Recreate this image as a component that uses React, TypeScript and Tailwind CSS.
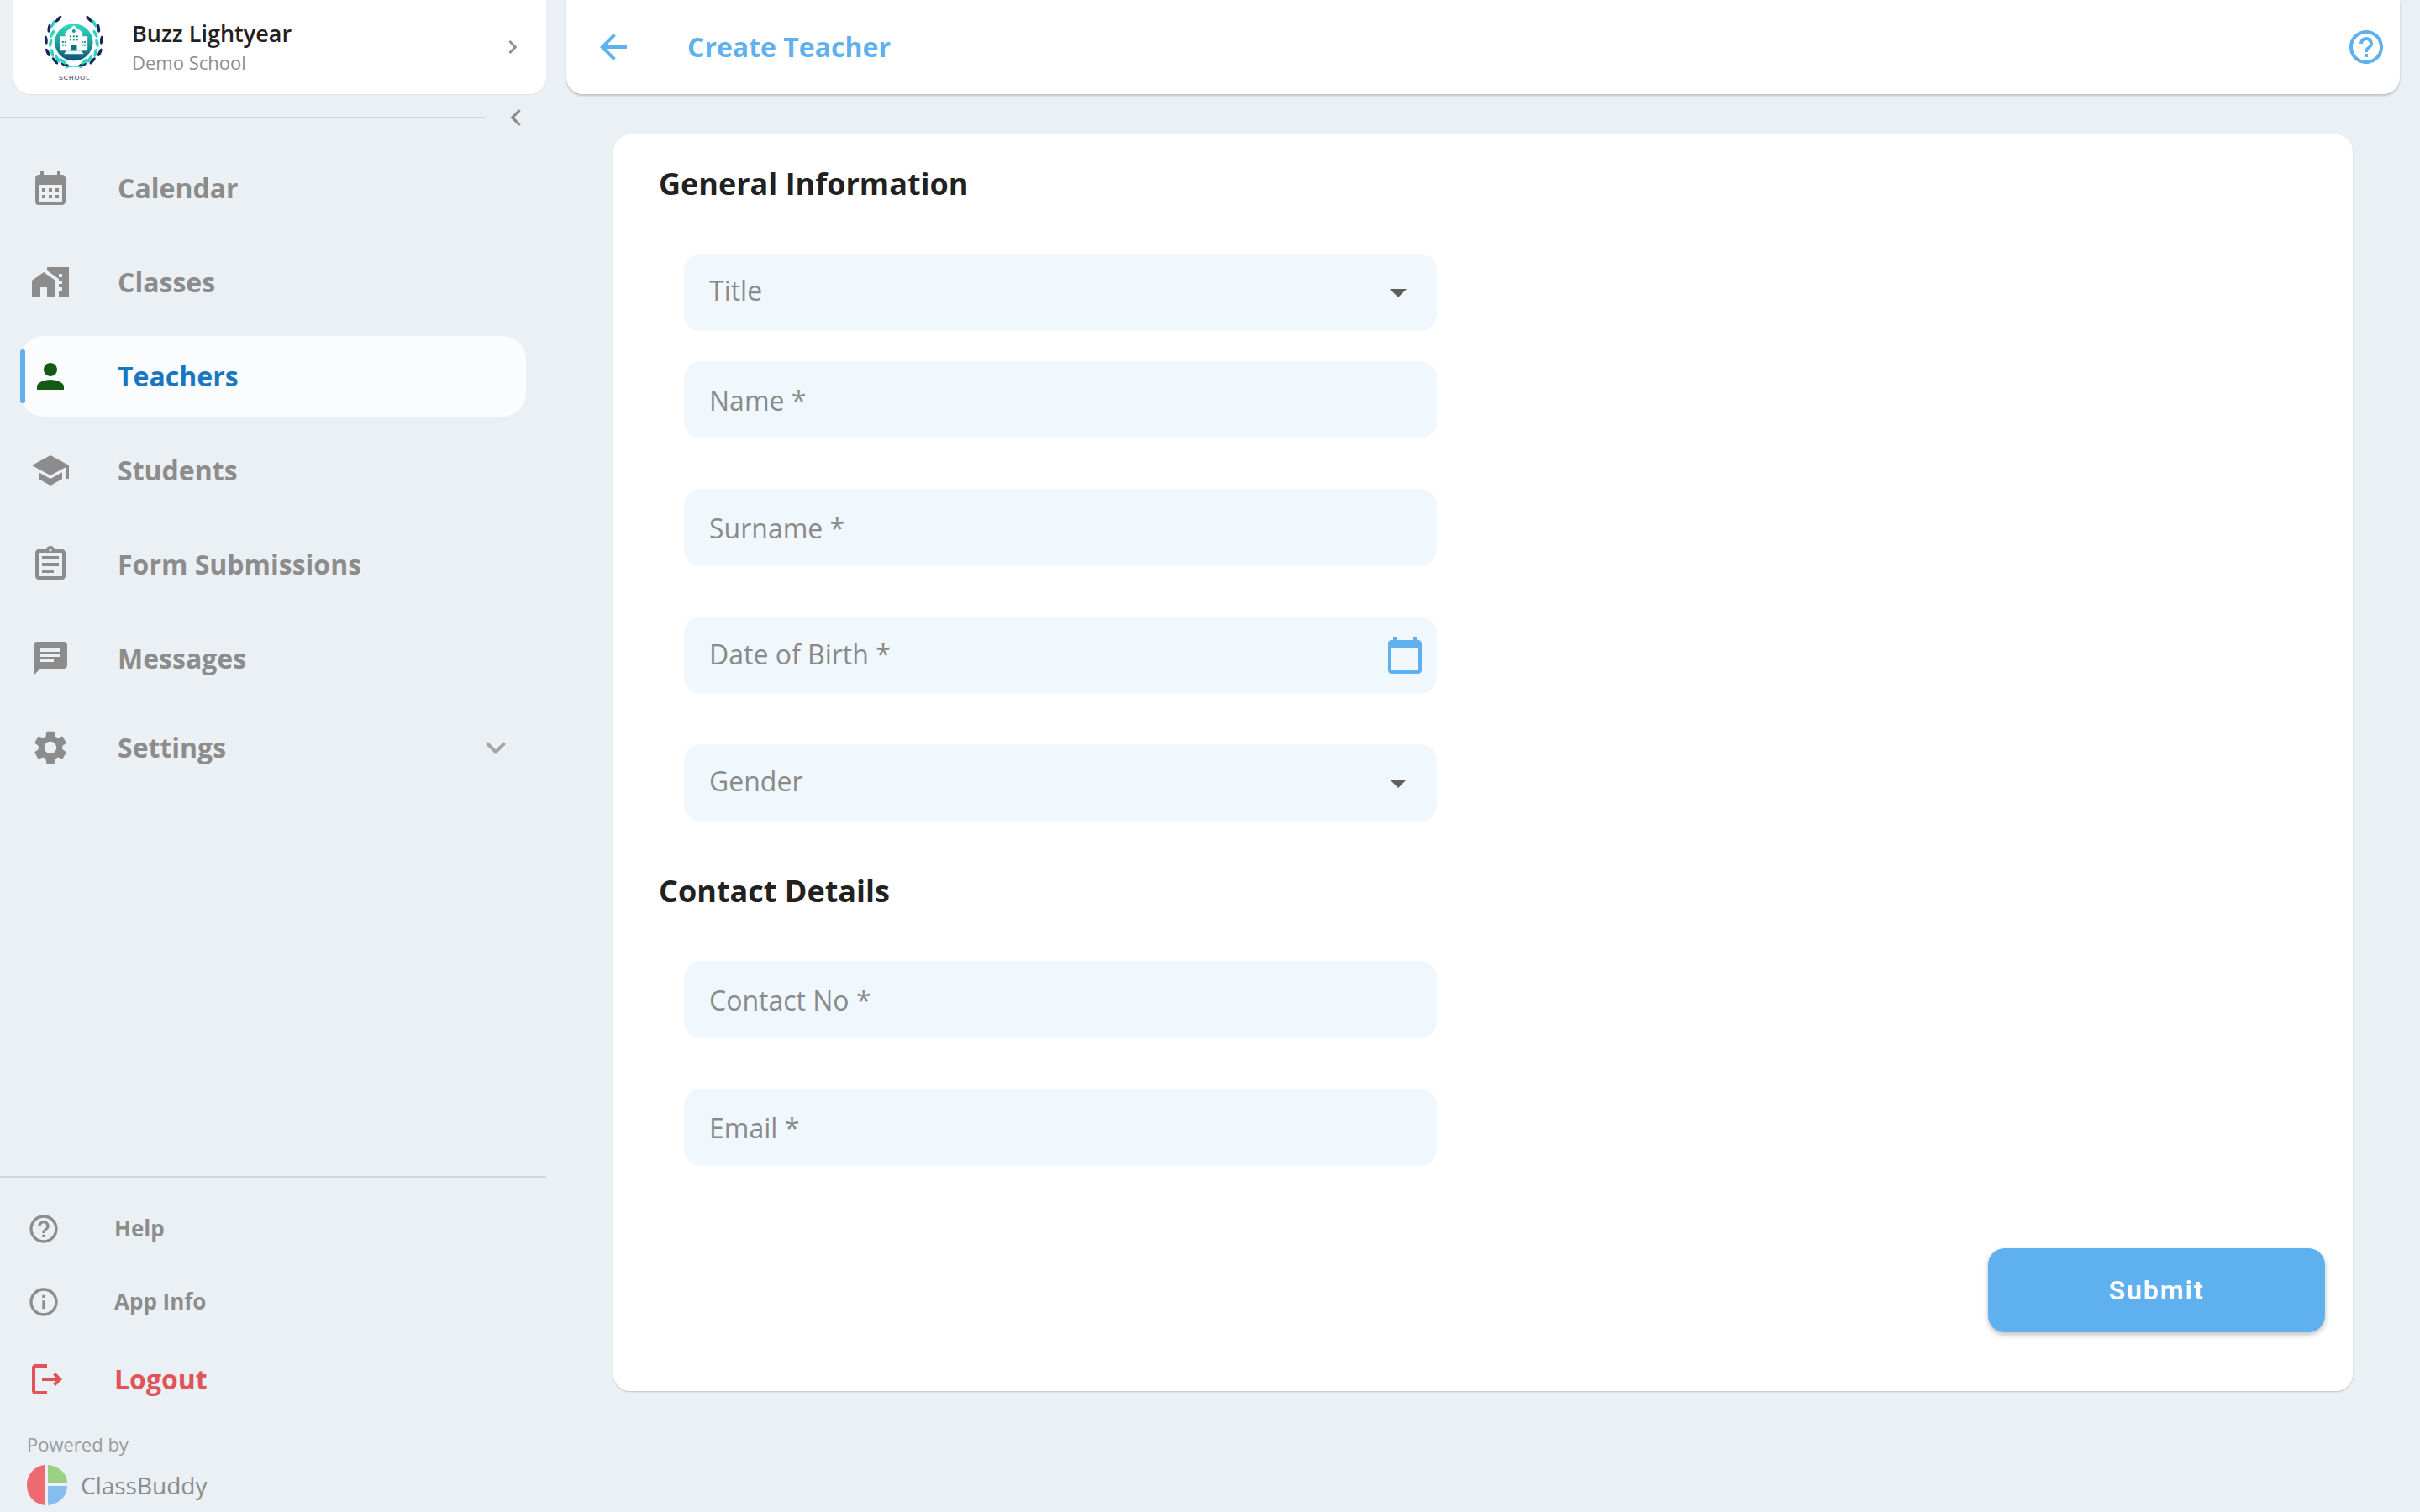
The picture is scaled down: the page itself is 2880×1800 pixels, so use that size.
import { type ReactNode } from "react"
import {
  MdArrowBack,
  MdArrowDropDown,
  MdCalendarMonth,
  MdCalendarToday,
  MdChat,
  MdChevronLeft,
  MdChevronRight,
  MdExpandMore,
  MdHelpOutline,
  MdInfoOutline,
  MdMapsHomeWork,
  MdOutlineAssignment,
  MdOutlineLogout,
  MdPerson,
  MdSchool,
  MdSettings,
} from "react-icons/md"

const font = "font-['Open_Sans',sans-serif]"

const NAVY = "#14275e"
const TEAL = "#2fd3c0"

// left half of the wreath, the right half is mirrored: [cx, cy, tilt, colour]
const leaves: [number, number, number, string][] = [
  [148, 67, 42, NAVY],
  [129, 84, 28, TEAL],
  [115, 100, 8, NAVY],
  [126, 120, 28, TEAL],
  [104, 142, -6, NAVY],
  [120, 152, 12, TEAL],
  [110, 186, -24, NAVY],
  [126, 188, -10, TEAL],
  [136, 216, -40, NAVY],
  [146, 210, -30, TEAL],
  [172, 230, -68, NAVY],
  [165, 219, -48, TEAL],
]

function SchoolLogo() {
  return (
    <div className="mt-[17px] ml-[34px] flex w-[77px] shrink-0 flex-col items-center self-start">
      <svg width="77" height="70" viewBox="90 50 230 210">
        <defs>
          <linearGradient id="crest" x1="0" y1="0" x2="0" y2="1">
            <stop offset="0" stopColor="#2fdcc0" />
            <stop offset="0.55" stopColor="#1c9a9a" />
            <stop offset="1" stopColor="#124f78" />
          </linearGradient>
        </defs>
        {leaves.map(([cx, cy, tilt, fill], i) => (
          <g key={i} fill={fill}>
            <ellipse cx={cx} cy={cy} rx="5.5" ry="15" transform={`rotate(${tilt} ${cx} ${cy})`} />
            <ellipse cx={406 - cx} cy={cy} rx="5.5" ry="15" transform={`rotate(${-tilt} ${406 - cx} ${cy})`} />
          </g>
        ))}
        <path d="M172 242q31-14 62 0" fill="none" stroke={TEAL} strokeWidth="5" />
        <ellipse cx="203" cy="150" rx="68" ry="66" fill="url(#crest)" />
        <path d="M172 115l31-25 31 25v14h18v51H154v-51h18z" fill="#fff" />
        <path d="M168 192h70l-8-12h-54z" fill="#e8fbf8" />
        <rect x="194" y="160" width="20" height="20" fill="#156f80" />
        <g fill="#1a8f96">
          <rect x="161" y="146" width="6" height="6" />
          <rect x="170" y="146" width="6" height="6" />
          <rect x="161" y="157" width="6" height="6" />
          <rect x="170" y="157" width="6" height="6" />
          <rect x="230" y="146" width="6" height="6" />
          <rect x="239" y="146" width="6" height="6" />
          <rect x="230" y="157" width="6" height="6" />
          <rect x="239" y="157" width="6" height="6" />
          <rect x="188" y="126" width="6" height="6" />
          <rect x="200" y="126" width="6" height="6" />
          <rect x="212" y="126" width="6" height="6" />
          <rect x="188" y="138" width="6" height="6" />
          <rect x="200" y="138" width="6" height="6" />
          <rect x="212" y="138" width="6" height="6" />
          <circle cx="203" cy="110" r="6" />
        </g>
      </svg>
      <span className="font-['Liberation_Sans',sans-serif] text-[7.5px] leading-[12px] tracking-[1px] text-[#1b2a55]">SCHOOL</span>
    </div>
  )
}

function BuddyLogo() {
  return (
    <svg width="48" height="48" viewBox="0 0 48 48">
      <path d="M22 0C9 1 0 11 0 24s9 23 22 24z" fill="#ee6a70" />
      <path d="M25 0c12 1 23 9 23 22H25z" fill="#9bd085" />
      <path d="M25 25h23c0 13-11 22-23 23z" fill="#85bdef" />
    </svg>
  )
}

function NavItem({ icon, label, active }: { icon: ReactNode; label: string; active?: boolean }) {
  return (
    <div className="flex h-[112px] items-center">
      <div className={`relative ml-[24px] flex h-[96px] w-[602px] items-center pl-[12px] ${active ? "rounded-[28px] bg-[#fafcfe]" : ""}`}>
        {active && <div className="absolute top-[16px] left-0 h-[64px] w-[6px] rounded-[3px] bg-[#5fb0ee]" />}
        <div className="flex w-[48px] justify-center">{icon}</div>
        <span className={`ml-[56px] text-[32px] font-bold ${active ? "text-[#1976c0]" : "text-[#8c8c8c]"}`}>{label}</span>
      </div>
    </div>
  )
}

function Field({ label, className, labelClass, children }: { label: string; className?: string; labelClass?: string; children?: ReactNode }) {
  return (
    <div className={`flex h-[92px] w-[896px] items-center justify-between rounded-[20px] bg-[#f0f7fd] pl-[30px] ${className ?? ""}`}>
      <span className={`text-[32px] text-[#8a8a8a] ${labelClass ?? ""}`}>{label}</span>
      {children}
    </div>
  )
}

function DropArrow() {
  return <MdArrowDropDown size={48} className="mr-[22px] text-[#5f5f5f]" />
}

export default function App() {
  return (
    <div className={`flex h-[1800px] w-[2880px] overflow-hidden bg-[#ebf0f4] ${font}`}>
      {/* Sidebar */}
      <aside className="flex w-[674px] shrink-0 flex-col">
        <div className="ml-[16px] flex h-[112px] w-[634px] items-center rounded-b-[20px] bg-white shadow-[0_1px_2px_rgba(0,0,0,0.06)]">
          <SchoolLogo />
          <div className="ml-[30px] flex flex-1 flex-col">
            <span className="mt-[-2px] text-[27px] leading-[38px] font-semibold text-[#212121]">Buzz Lightyear</span>
            <span className="mt-[-1px] text-[22px] leading-[32px] text-[#8e8e8e]">Demo School</span>
          </div>
          <MdChevronRight size={32} className="mr-[24px] text-[#8c8c8c]" />
        </div>
        <div className="flex h-[56px] items-center">
          <div className="h-[2px] w-[578px] bg-[#d3d7da]" />
          <MdChevronLeft size={40} className="ml-[16px] text-[#8c8c8c]" />
        </div>
        <nav className="flex flex-col">
          <NavItem label="Calendar" icon={<MdCalendarMonth size={48} className="text-[#8c8c8c]" />} />
          <NavItem label="Classes" icon={<MdMapsHomeWork size={48} className="text-[#8c8c8c]" />} />
          <NavItem active label="Teachers" icon={<MdPerson size={48} className="text-[#155a14]" />} />
          <NavItem label="Students" icon={<MdSchool size={48} className="text-[#8c8c8c]" />} />
          <NavItem label="Form Submissions" icon={<MdOutlineAssignment size={48} className="text-[#8c8c8c]" />} />
          <NavItem label="Messages" icon={<MdChat size={48} className="text-[#8c8c8c]" />} />
          <div className="flex h-[100px] items-center pl-[36px]">
            <MdSettings size={48} className="text-[#8c8c8c]" />
            <span className="ml-[56px] flex-1 text-[32px] font-bold text-[#8c8c8c]">Settings</span>
            <MdExpandMore size={48} className="mr-[60px] text-[#a5a5a5]" />
          </div>
        </nav>
        <div className="mt-auto w-[650px] border-t-2 border-[#d3d7da]">
          <div className="mt-[17px] flex h-[87px] items-center pl-[32px]">
            <MdHelpOutline size={40} className="text-[#8c8c8c]" />
            <span className="ml-[64px] text-[26px] font-bold text-[#8c8c8c]">Help</span>
          </div>
          <div className="flex h-[87px] items-center pl-[32px]">
            <MdInfoOutline size={40} className="text-[#8c8c8c]" />
            <span className="ml-[64px] text-[26px] font-bold text-[#8c8c8c]">App Info</span>
          </div>
          <div className="flex h-[98px] items-center pl-[32px]">
            <MdOutlineLogout size={48} className="text-[#e05358]" />
            <span className="ml-[56px] text-[32px] font-bold text-[#e05358]">Logout</span>
          </div>
          <div className="mt-[13px] pl-[32px] text-[22px] leading-[30px] text-[#9a9a9a]">Powered by</div>
          <div className="mt-[10px] mb-[8px] flex h-[48px] items-center pl-[32px]">
            <BuddyLogo />
            <span className="ml-[16px] text-[28px] text-[#8c8c8c]">ClassBuddy</span>
          </div>
        </div>
      </aside>

      {/* Main */}
      <div className="flex min-w-0 flex-1 flex-col">
        <header className="mr-[24px] flex h-[112px] items-center rounded-b-[20px] bg-white pr-[16px] pl-[32px] shadow-[0_2px_3px_rgba(0,0,0,0.2)]">
          <MdArrowBack size={48} className="text-[#5fb0ee]" />
          <span className="ml-[64px] flex-1 text-[32px] font-bold text-[#5fb0ee]">Create Teacher</span>
          <MdHelpOutline size={48} className="text-[#5fb0ee]" />
        </header>
        <main className="mt-[48px] ml-[56px] flex h-[1496px] w-[2070px] flex-col rounded-[20px] bg-white pt-[31px] pr-[33px] pl-[54px] shadow-[0_1px_2px_rgba(0,0,0,0.2)]">
          <h2 className="h-[56px] text-[36px] leading-[56px] font-bold text-[#212121]">General Information</h2>
          <div className="ml-[30px] flex flex-col">
            <Field label="Title" className="mt-[55px]" labelClass="mb-[4px]">
              <DropArrow />
            </Field>
            <Field label="Name *" className="mt-[36px]" labelClass="mt-[1px]" />
            <Field label="Surname *" className="mt-[60px]" labelClass="mt-[1px]" />
            <Field label="Date of Birth *" className="mt-[60px]" labelClass="mb-[3px]">
              <MdCalendarToday size={48} className="mr-[14px] text-[#5fb0ee]" />
            </Field>
            <Field label="Gender" className="mt-[60px]" labelClass="mb-[4px]">
              <DropArrow />
            </Field>
          </div>
          <h2 className="mt-[55px] h-[56px] text-[36px] leading-[56px] font-bold text-[#212121]">Contact Details</h2>
          <div className="ml-[30px] flex flex-col">
            <Field label="Contact No *" className="mt-[55px]" labelClass="mt-[1px]" />
            <Field label="Email *" className="mt-[60px]" labelClass="mt-[1px]" />
          </div>
          <button className="mt-[98px] ml-auto flex h-[100px] w-[401px] items-center justify-center rounded-[20px] bg-[#5fb0ee] font-['Roboto',sans-serif] text-[32px] font-semibold tracking-[2px] text-white shadow-[0_3px_6px_rgba(0,0,0,0.25)]">
            Submit
          </button>
        </main>
      </div>
    </div>
  )
}
